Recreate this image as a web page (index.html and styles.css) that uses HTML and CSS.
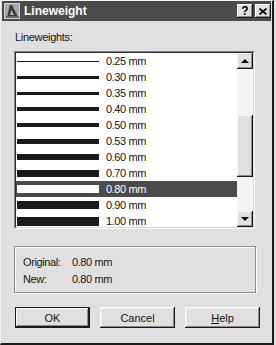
FILE: index.html
```html
<!DOCTYPE html>
<html lang="en">
<head>
  <meta charset="UTF-8">
  <title>Lineweight</title>
  <link rel="stylesheet" href="styles.css">
</head>
<body>
  <div class="dialog">
    <div class="titlebar">
      <svg class="app-icon" width="16" height="16" viewBox="0 0 16 16">
        <rect x="0" y="0" width="16" height="16" fill="#a8a8a8"/>
        <rect x="0.5" y="0.5" width="15" height="15" fill="none" stroke="#d0d0d0"/>
        <polygon points="3,14 6,2 8,2 14,14" fill="#3c3c3c"/>
        <polygon points="6,12 7.5,7 10,12" fill="#b8b8b8"/>
        <rect x="2" y="13" width="13" height="2" fill="#6a6a6a"/>
      </svg>
      <span class="title">Lineweight</span>
      <div class="cap-btn help-btn">?</div>
      <div class="cap-btn">
        <svg width="8" height="7" viewBox="0 0 8 7">
          <path d="M0.5 0.5 L7.5 6.5 M7.5 0.5 L0.5 6.5" stroke="#000" stroke-width="1.6"/>
        </svg>
      </div>
    </div>

    <div class="content">
      <div class="field-label">Lineweights:</div>

      <div class="listbox">
        <div class="list-inner">
          <div class="rows">
            <div class="row"><span class="sample" style="height:1px"></span><span class="value">0.25 mm</span></div>
            <div class="row"><span class="sample" style="height:3px"></span><span class="value">0.30 mm</span></div>
            <div class="row"><span class="sample" style="height:3px"></span><span class="value">0.35 mm</span></div>
            <div class="row"><span class="sample" style="height:4px"></span><span class="value">0.40 mm</span></div>
            <div class="row"><span class="sample" style="height:4px"></span><span class="value">0.50 mm</span></div>
            <div class="row"><span class="sample" style="height:5px"></span><span class="value">0.53 mm</span></div>
            <div class="row"><span class="sample" style="height:6px"></span><span class="value">0.60 mm</span></div>
            <div class="row"><span class="sample" style="height:7px"></span><span class="value">0.70 mm</span></div>
            <div class="row selected"><span class="sample" style="height:8px"></span><span class="value">0.80 mm</span></div>
            <div class="row"><span class="sample" style="height:8px"></span><span class="value">0.90 mm</span></div>
            <div class="row"><span class="sample" style="height:9px"></span><span class="value">1.00 mm</span></div>
          </div>
          <div class="scrollbar">
            <div class="sb-btn"><span class="arrow-up"></span></div>
            <div class="sb-track">
              <div class="sb-thumb"></div>
            </div>
            <div class="sb-btn"><span class="arrow-down"></span></div>
          </div>
        </div>
      </div>

      <div class="groupbox">
        <div class="info-row"><span class="info-label">Original:</span><span>0.80 mm</span></div>
        <div class="info-row"><span class="info-label">New:</span><span>0.80 mm</span></div>
      </div>

      <div class="buttons">
        <button class="btn default">OK</button>
        <button class="btn">Cancel</button>
        <button class="btn"><u>H</u>elp</button>
      </div>
    </div>
  </div>
</body>
</html>
```

FILE: styles.css
```css
body {
  margin: 0;
  background: #e0e0e0;
  font-family: "Liberation Sans", Arial, sans-serif;
  font-size: 11px;
  color: #151515;
}
.dialog {
  box-sizing: border-box;
  width: 274px;
  height: 345px;
  background: #e0e0e0;
  border-top: 1px solid #f2f2f2;
  border-left: 1px solid #f2f2f2;
  border-right: 2px solid #1c1c1c;
  border-bottom: 2px solid #1c1c1c;
  padding: 0 1px;
}
.titlebar {
  height: 20px;
  background: #4b4b4b;
  display: flex;
  align-items: center;
  padding-left: 2px;
}
.app-icon {
  margin-right: 4px;
}
.title {
  flex: 1;
  color: #fff;
  font-weight: bold;
  font-size: 12px;
}
.cap-btn {
  width: 16px;
  height: 14px;
  margin-left: 2px;
  background: #e0e0e0;
  box-shadow: inset -1px -1px #1a1a1a, inset 1px 1px #fff, inset -2px -2px #8a8a8a;
  display: flex;
  align-items: center;
  justify-content: center;
  font-weight: bold;
  font-size: 12px;
  color: #000;
}
.content {
  padding: 10px 0 0 12px;
}
.field-label {
  line-height: 13px;
  padding-left: 1px;
  letter-spacing: -0.3px;
}
.listbox {
  margin-top: 7px;
  width: 241px;
  height: 178px;
  box-sizing: border-box;
  border: 1px solid;
  border-color: #808080 #fff #fff #808080;
}
.list-inner {
  height: 100%;
  box-sizing: border-box;
  border: 1px solid;
  border-color: #303030 #d8d8d8 #d8d8d8 #303030;
  display: flex;
}
.rows {
  flex: 1;
  background: #fff;
  overflow: hidden;
}
.row {
  height: 16px;
  display: flex;
  align-items: center;
  padding-left: 1px;
}
.sample {
  display: block;
  width: 82px;
  background: #1a1a1a;
}
.value {
  margin-left: 7px;
  letter-spacing: -0.4px;
}
.row.selected {
  background: #4b4b4b;
  color: #fff;
}
.row.selected .sample {
  background: #fff;
}
.scrollbar {
  width: 16px;
  display: flex;
  flex-direction: column;
}
.sb-btn {
  height: 16px;
  background: #e0e0e0;
  box-shadow: inset -1px -1px #1a1a1a, inset 1px 1px #f4f4f4, inset -2px -2px #8a8a8a;
  display: flex;
  align-items: center;
  justify-content: center;
}
.arrow-up {
  border-left: 4px solid transparent;
  border-right: 4px solid transparent;
  border-bottom: 4px solid #000;
}
.arrow-down {
  border-left: 4px solid transparent;
  border-right: 4px solid transparent;
  border-top: 4px solid #000;
}
.sb-track {
  flex: 1;
  background: #f4f4f4;
}
.sb-thumb {
  margin-top: 46px;
  height: 62px;
  background: #e0e0e0;
  box-shadow: inset -1px -1px #1a1a1a, inset 1px 1px #f4f4f4, inset -2px -2px #8a8a8a;
}
.groupbox {
  margin-top: 17px;
  width: 242px;
  box-sizing: border-box;
  border: 1px solid #8a8a8a;
  box-shadow: 1px 1px 0 #fff, inset 1px 1px 0 #fff;
  padding: 7px 0 4px 8px;
}
.info-row {
  line-height: 17px;
  letter-spacing: -0.4px;
}
.info-label {
  display: inline-block;
  width: 49px;
}
.buttons {
  margin-top: 14px;
  padding-left: 1px;
  display: flex;
  gap: 10px;
}
.btn {
  width: 75px;
  height: 21px;
  padding: 0;
  border: none;
  background: #e0e0e0;
  box-shadow: inset -1px -1px #1a1a1a, inset 1px 1px #fff, inset -2px -2px #8a8a8a, inset 2px 2px #ececec;
  font-family: "Liberation Sans", Arial, sans-serif;
  font-size: 11px;
  color: #151515;
}
.btn.default {
  box-shadow: inset 0 0 0 1px #1a1a1a, inset -2px -2px #1a1a1a, inset 2px 2px #fff, inset -3px -3px #8a8a8a;
}
```
